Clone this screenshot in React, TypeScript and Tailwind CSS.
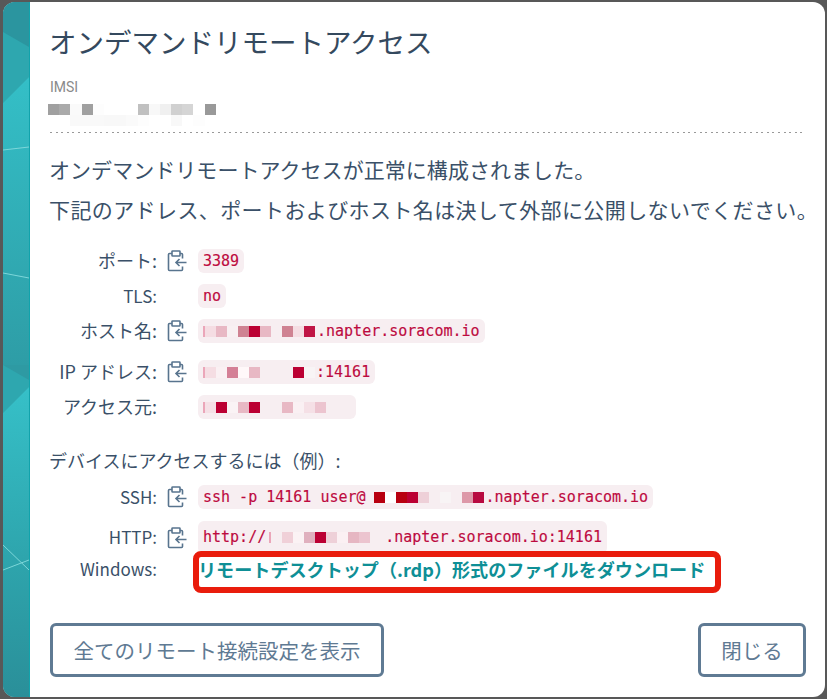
import React from 'react';

const CHIP = '#f7eef1';

// masked values in the screenshot: blocks of flat colour, `size` wide unless a width is given
type Block = string | [string, number];

const Mosaic: React.FC<{ blocks: Block[]; size?: number }> = ({ blocks, size = 11 }) => (
  <span className="inline-flex align-middle h-[11px]">
    {blocks.map((b, i) => {
      const [color, width] = typeof b === 'string' ? [b, size] : b;
      return <span key={i} style={{ backgroundColor: color, width }} className="block h-full" />;
    })}
  </span>
);

const CopyIcon: React.FC = () => (
  <svg viewBox="0 0 20 22" className="w-[20px] h-[22px] shrink-0 text-[#58748e]" fill="none" stroke="currentColor" strokeWidth="1.6">
    <rect x="5" y="1" width="8" height="5" rx="0.6" />
    <path d="M5 3.5H2.5a1 1 0 0 0-1 1V19.5a1 1 0 0 0 1 1H14.5a1 1 0 0 0 1-1V16.5" />
    <path d="M13 3.5h1.5a1 1 0 0 1 1 1V8.5" />
    <path d="M19.5 12.5H9M12.5 9L9 12.5L12.5 16" />
  </svg>
);

const Chip: React.FC<{ children: React.ReactNode; className?: string }> = ({ children, className = 'h-[24px]' }) => (
  <code className={`inline-flex items-center px-[5px] rounded-[6px] bg-[#f7eef1] text-[#bd0a3f] text-[15px] leading-none whitespace-pre font-['DejaVu_Sans_Mono',monospace] [-webkit-text-stroke:0.15px_#bd0a3f] ${className}`}>
    {children}
  </code>
);

const Row: React.FC<{ label: string; latin?: boolean; copy?: boolean; children: React.ReactNode; className?: string }> = ({ label, latin, copy, children, className = '' }) => (
  <div className={`flex items-center ${className}`}>
    <div className={`w-[107px] pb-[2px] text-right leading-none whitespace-nowrap ${latin ? 'text-[17px]' : 'text-[18px]'}`}>{label}</div>
    <div className="w-[41px] flex justify-start pl-[10px]">{copy && <CopyIcon />}</div>
    {children}
  </div>
);

const Strip: React.FC = () => (
  <svg viewBox="0 0 27 695" preserveAspectRatio="none" className="w-[27px] h-full shrink-0">
    <defs>
      <linearGradient id="top" x1="0" y1="0" x2="0" y2="1">
        <stop offset="0" stopColor="#34bfc7" />
        <stop offset="1" stopColor="#2e9da6" />
      </linearGradient>
      <linearGradient id="bottom" x1="0" y1="0" x2="0" y2="1">
        <stop offset="0" stopColor="#36c0c8" />
        <stop offset="0.55" stopColor="#2ea5ad" />
        <stop offset="1" stopColor="#2a8f99" />
      </linearGradient>
    </defs>
    <rect width="27" height="695" fill="#2e9aa3" />
    <rect width="27" height="60" fill="#2b959f" />
    <polygon points="0,30 26,45 26,75 0,101" fill="#2ea7af" />
    <polygon points="0,101 26,75 26,363 0,363" fill="url(#top)" />
    <polygon points="0,363 26,378 26,385 0,411" fill="#2ea7af" />
    <polygon points="0,411 26,385 26,695 0,695" fill="url(#bottom)" />
    <path d="M0 148L26 145M0 271L26 276M0 543L26 568M0 568L26 558" stroke="#7dd6d9" strokeWidth="1" fill="none" />
    <rect x="26" width="1" height="695" fill="#11a3ac" />
  </svg>
);

export default function App() {
  return (
    <div className="w-[827px] h-[699px] bg-[#585858] pt-[2px] pl-[3px] pr-[2px] pb-[2px] overflow-hidden">
      <div className="flex h-full rounded-[12px] overflow-hidden bg-white text-[#3a5068] font-['Noto_Sans_CJK_JP','Noto_Sans',sans-serif]">
        <Strip />

        <div className="flex-1 min-w-0 pl-[20px] pr-[20px] flex flex-col">
          <h1 className="mt-[19px] -ml-[1px] text-[27.5px] leading-[40px] font-normal text-[#34495e] whitespace-nowrap">オンデマンドリモートアクセス</h1>

          <div className="mt-[17px] text-[14px] leading-[18px] text-[#8a8a8a] font-['Roboto',sans-serif]">IMSI</div>
          <div className="mt-[8px] -ml-[2px] flex flex-col">
            <Mosaic size={11.2} blocks={['#a0a0a0', '#aaaaaa', '#fafafa', '#a0a0a0', '#fdfdfd', '#ffffff', '#ffffff', '#ffffff', '#c0c0c0', '#f8f8f8', '#f0f0f0', '#d0d0d0', '#d5d5d5', '#ffffff', '#999999']} />
            <Mosaic size={11.2} blocks={['#ffffff', '#ffffff', '#f9f9f9', '#f9f9f9', '#f9f9f9', '#f8f8f8', '#f8f8f8', '#fafafa', '#fdfdfd', '#ffffff', '#ffffff', '#f8f8f8', '#ffffff', '#fdfdfd']} />
          </div>
          <div className="mt-[6px] mr-[2px] h-[1px] bg-[repeating-linear-gradient(90deg,#999999_0,#999999_2px,transparent_2px,transparent_5.6px)]" />

          <p className="mt-[22px] -ml-[1px] text-[21px] leading-[28px] tracking-[0.05px] whitespace-nowrap">オンデマンドリモートアクセスが正常に構成されました。</p>
          <p className="mt-[12px] -ml-[1px] text-[21px] leading-[28px] tracking-[0.4px] whitespace-nowrap">下記のアドレス、ポートおよびホスト名は決して外部に公開しないでください。</p>

          <div className="mt-[26px] flex flex-col">
            <Row label="ポート:" copy>
              <Chip>3389</Chip>
            </Row>
            <Row label="TLS:" latin className="mt-[11px]">
              <Chip>no</Chip>
            </Row>
            <Row label="ホスト名:" copy className="mt-[11px]">
              <Chip>
                <Mosaic blocks={[['#eba6b9', 2], '#f5dde3', '#e8b8c4', '#f8f0f2', '#cf8292', '#bb0033', '#e8b8c4', CHIP, '#cf8292', '#f5dde3', '#c01545', [CHIP, 2]]} />
                .napter.soracom.io
              </Chip>
            </Row>
            <Row label="IP アドレス:" copy className="mt-[17px]">
              <Chip>
                <Mosaic blocks={[['#eba6b9', 2], '#f5dde3', '#faf0f3', '#d47f96', '#fff8f9', '#e8b8c4', CHIP, CHIP, CHIP, '#bb0033', '#f8f4f5', [CHIP, 1]]} />
                :14161
              </Chip>
            </Row>
            <Row label="アクセス元:" className="mt-[11px]">
              <Chip>
                <Mosaic blocks={[['#eba6b9', 2], '#f5e0e6', '#bb0033', '#faf3f5', '#e8b8c4', '#bb0033', CHIP, CHIP, '#e8b8c4', '#faf0f3', '#f5e0e6', '#ecc4cf', [CHIP, 25]]} />
              </Chip>
            </Row>
          </div>

          <div className="mt-[29px] -ml-[1px] text-[18px] leading-[24px] whitespace-nowrap">デバイスにアクセスするには（例）:</div>

          <div className="mt-[13px] flex flex-col">
            <Row label="SSH:" latin copy>
              <Chip>
                ssh -p 14161 user@
                <Mosaic blocks={[[CHIP, 8], '#b80010', '#ffffff', '#b80010', '#bb0033', '#eed0d8', CHIP, '#f8f4f5', CHIP, '#dd98a8', '#b80a40', [CHIP, 2]]} />
                .napter.soracom.io
              </Chip>
            </Row>
            <Row label="HTTP:" latin copy className="mt-[12px]">
              <Chip className="h-[33px]">
                http://
                <Mosaic blocks={[[CHIP, 3], ['#eba6b9', 2], [CHIP, 11], '#f0d0d8', '#fbf2f4', '#e0b0be', '#bb0033', '#eed0d8', '#fbf0f3', '#e6b6c2', '#ecc4cf', [CHIP, 15]]} />
                .napter.soracom.io:14161
              </Chip>
            </Row>
            <Row label="Windows:" latin className="h-[31px]">
              <div className="relative">
                <a className="text-[18.1px] leading-none font-bold text-[#0e8f96] whitespace-nowrap">リモートデスクトップ（.rdp）形式のファイルをダウンロード</a>
                <div className="absolute -left-[5px] -right-[16px] -top-[7px] -bottom-[11px] border-[6px] border-[#e91c0c] rounded-[8px]" />
              </div>
            </Row>
          </div>

          <div className="mt-[38px] -mr-[1px] flex justify-between">
            <button className="w-[334px] h-[54px] border-[3px] border-[#5f7a93] rounded-[6px] text-[20.5px] text-[#5f7a93]">全てのリモート接続設定を表示</button>
            <button className="w-[108px] h-[54px] border-[3px] border-[#5f7a93] rounded-[6px] text-[20.5px] text-[#5f7a93]">閉じる</button>
          </div>
        </div>
      </div>
    </div>
  );
}
